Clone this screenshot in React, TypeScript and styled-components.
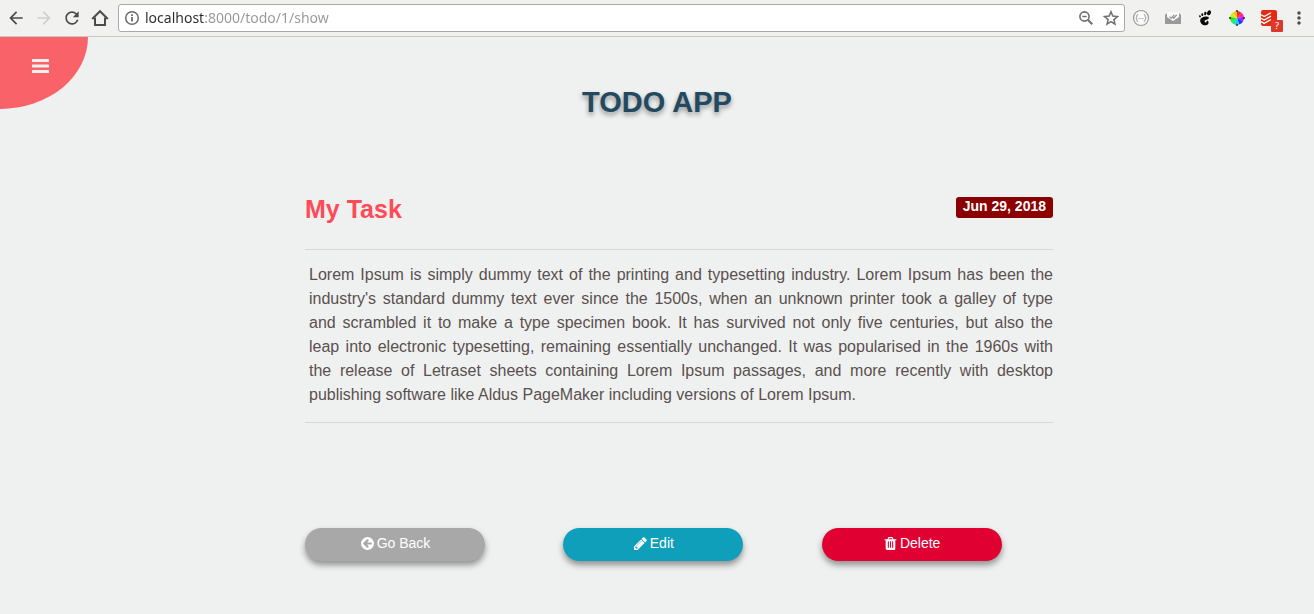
import React from "react";
import styled, { createGlobalStyle, css } from "styled-components";
import { MdArrowBack, MdArrowForward, MdRefresh, MdMoreVert } from "react-icons/md";

const GlobalStyle = createGlobalStyle`
  *, *::before, *::after { box-sizing: border-box; }
  body {
    margin: 0;
    background: #eff1f0;
    color: #555;
    font-family: "Liberation Sans", Arial, sans-serif;
    font-size: 16px;
    line-height: 24px;
  }
  button { font: inherit; border: 0; cursor: pointer; }
`;

/* ---------- Browser bar ---------- */

const Toolbar = styled.header`
  display: flex;
  align-items: center;
  height: 37px;
  padding: 0 1px 1px 2px;
  background: #f1f1ef;
  border-bottom: 1px solid #c8c8c8;
`;

const ToolButton = styled.button<{ $width?: number; $muted?: boolean }>`
  display: flex;
  flex: none;
  align-items: center;
  justify-content: center;
  width: ${(p) => p.$width ?? 28}px;
  height: 28px;
  padding: 0;
  background: none;
  color: ${(p) => (p.$muted ? "#6f6f6f" : "#4b4b4b")};
  &:disabled { color: #cfcfcf; }
`;

const OverflowButton = styled(ToolButton)`
  margin-left: 4px;
`;

const AddressBar = styled.div`
  display: flex;
  flex: 1;
  align-items: center;
  height: 28px;
  margin: 0 4px;
  padding: 0 1px 0 5px;
  background: #fff;
  border: 1px solid #a9a9a9;
  border-radius: 3px;
  color: #6b6b6b;
`;

const UrlInput = styled.input`
  flex: 1;
  min-width: 0;
  height: 24px;
  padding: 0;
  margin-left: 5px;
  border: 0;
  outline: 0;
  font: 14px/24px "Noto Sans", "Open Sans", sans-serif;
  color: transparent;
  caret-color: #222;
  background: linear-gradient(90deg, #2b2b2b 59px, #969696 59px);
  background-clip: text;
  -webkit-background-clip: text;
`;

const HomeIcon = () => (
  <svg width="18" height="18" viewBox="0 0 18 18" fill="none" stroke="currentColor" strokeWidth="2" aria-hidden>
    <path d="M1.200 10 L9 2.200 L16.800 10" />
    <path d="M4 8.500 V16 H14 V8.500" />
  </svg>
);

const InfoIcon = () => (
  <svg width="16" height="16" viewBox="0 0 16 16" fill="none" stroke="currentColor" aria-hidden>
    <circle cx="8" cy="8" r="6.300" strokeWidth="1.500" />
    <path d="M8 7 V11.500 M8 4.200 V6" strokeWidth="1.800" />
  </svg>
);

const ZoomOutIcon = () => (
  <svg width="18" height="18" viewBox="0 0 18 18" fill="none" stroke="currentColor" aria-hidden>
    <circle cx="7.500" cy="7.500" r="4.600" strokeWidth="1.600" />
    <path d="M5.300 7.500 H9.700" strokeWidth="1.400" />
    <path d="M11 11 L15.300 15.300" strokeWidth="2" />
  </svg>
);

const StarIcon = () => (
  <svg width="18" height="18" viewBox="0 0 18 18" fill="none" stroke="currentColor" strokeWidth="1.500" aria-hidden>
    <path d="M9 2.800 L10.800 7.100 L15.500 7.500 L11.900 10.600 L13 15.200 L9 12.700 L5 15.200 L6.100 10.600 L2.500 7.500 L7.200 7.100 Z" />
  </svg>
);

const BracesIcon = () => (
  <svg width="18" height="18" viewBox="0 0 18 18" fill="none" stroke="#999" aria-hidden>
    <circle cx="9" cy="9" r="7.500" fill="#fafafa" strokeWidth="1.200" />
    <path d="M6.200 5.500 q-1.400 0 -1.400 1.400 v1.100 l-1 1 1 1 v1.100 q0 1.400 1.400 1.400 M11.800 5.500 q1.400 0 1.400 1.400 v1.100 l1 1 -1 1 v1.100 q0 1.400 -1.400 1.400" />
    <path d="M6.700 9.500 h1 M8.500 9.500 h1 M10.300 9.500 h1" />
  </svg>
);

const MailIcon = () => (
  <svg width="18" height="18" viewBox="0 0 18 18" aria-hidden>
    <path d="M1 6 L4 3 H14 L17 6 V15 H1 Z" fill="#9a9a9a" />
    <path d="M3 3 H15 V9 L9 13 L3 9 Z" fill="#fbfbfb" />
    <path d="M1 7 L3 8 L9 12 L15 8 L17 7 V15 H1 Z" fill="#9a9a9a" />
    <path d="M5.500 7.500 l1.600 1.800 3.200 -3.500 M8.800 8.300 l.9 .9 3 -3.400" fill="none" stroke="#888" strokeWidth="1.100" />
  </svg>
);

const FootIcon = () => (
  <svg width="18" height="18" viewBox="0 0 18 18" aria-hidden>
    <g fill="#0a0a0a">
      <ellipse cx="13" cy="3.800" rx="1.900" ry="2.500" transform="rotate(28 13 3.800)" />
      <ellipse cx="9.300" cy="4.500" rx="1.200" ry="1.700" transform="rotate(12 9.300 4.500)" />
      <ellipse cx="6.300" cy="5.700" rx="1" ry="1.400" transform="rotate(-10 6.300 5.700)" />
      <ellipse cx="4" cy="7.300" rx=".9" ry="1.100" transform="rotate(-25 4 7.300)" />
      <path d="M12.600 8 C10.500 6.800 4.500 7.700 4.200 11.300 C4 14.700 7.300 16.700 9.800 16.300 C12.400 15.900 13.200 13.600 12.200 12.200 C11.200 11.300 10.300 12.300 10.600 13.100 C10.200 14 8.400 13.400 8.600 12 C9 10.400 13.700 11 12.600 8 Z" />
    </g>
  </svg>
);

const WHEEL = ["#ff2a1a", "#ff1fa8", "#a81cff", "#2430ff", "#12c8ff", "#12f07a", "#35e312", "#c8f01a", "#ffc21a"];

const wheelPoint = (turn: number) =>
  `${9 + 7 * Math.sin(turn * 2 * Math.PI)} ${9 - 7 * Math.cos(turn * 2 * Math.PI)}`;

const WheelIcon = () => (
  <svg width="18" height="18" viewBox="0 0 18 18" aria-hidden>
    {WHEEL.map((color, i) => (
      <path
        key={color}
        fill={color}
        d={`M9 9 L${wheelPoint(i / WHEEL.length)} A7 7 0 0 1 ${wheelPoint((i + 1) / WHEEL.length)} Z`}
      />
    ))}
    <path d="M9 1 v2 M9 15 v2 M1 9 h2 M15 9 h2" stroke="#222" strokeWidth="1.400" />
  </svg>
);

const StackIcon = () => (
  <svg width="18" height="18" viewBox="0 0 18 18" aria-hidden>
    <rect x="1" y="1" width="16" height="16" rx="2" fill="#e42a12" />
    <path
      d="M1 5.800 L4.200 7.600 L11 3.700 M1 9.200 L4.200 11 L11 7.100 M1 12.600 L4.200 14.400 L11 10.500"
      fill="none"
      stroke="#fff"
      strokeWidth="1.300"
    />
  </svg>
);

const BadgeAnchor = styled.span`
  position: relative;
  display: flex;
`;

const Badge = styled.span`
  position: absolute;
  left: 11px;
  top: 11px;
  width: 12px;
  height: 12px;
  border-radius: 1px;
  background: #db3a2b;
  color: #fff;
  font: 9px/12px "Noto Sans", sans-serif;
  text-align: center;
`;

/* ---------- Page ---------- */

const Page = styled.div`
  position: relative;
  padding-bottom: 48px;
`;

const MenuButton = styled.button`
  position: absolute;
  left: 0;
  top: 0;
  display: flex;
  justify-content: center;
  width: 88px;
  height: 72px;
  padding: 22px 8px 0 0;
  background: #f96268;
  border-bottom-right-radius: 100%;
  color: #eff1f0;
`;

const AppTitle = styled.h1`
  margin: 0;
  padding-top: 48px;
  text-align: center;
  color: #22495f;
  font-size: 29px;
  line-height: 34px;
  text-shadow: 0 3px 5px rgba(0, 0, 0, 0.4);
`;

const Main = styled.main`
  max-width: 792px;
  margin: 0 auto;
  padding-left: 44px;
`;

const TaskHeader = styled.div`
  display: flex;
  align-items: flex-start;
  justify-content: space-between;
  padding: 74px 0 24px;
  border-bottom: 1px solid #d5d8d8;
`;

const TaskTitle = styled.h2`
  margin: 0;
  color: #ff4b57;
  font-size: 25px;
  line-height: 32px;
`;

const DateLabel = styled.time`
  height: 21px;
  margin-top: 4px;
  padding: 0 7px;
  border-radius: 3px;
  background: #8b0000;
  color: #fff;
  font-size: 14px;
  font-weight: bold;
  line-height: 19px;
`;

const TaskText = styled.p`
  margin: 0;
  padding: 13px 0 15px 4px;
  border-bottom: 1px solid #d5d8d8;
  color: #5a504f;
  text-align: justify;
`;

const Actions = styled.div`
  display: grid;
  grid-template-columns: repeat(3, 1fr);
  gap: 27px;
  margin-top: 105px;
`;

const pill = css<{ $color: string }>`
  display: flex;
  justify-content: center;
  gap: 2px;
  width: 180px;
  height: 33px;
  padding: 5px 0 0;
  border-radius: 17px;
  background: ${(p) => p.$color};
  box-shadow: 0 4px 6px rgba(0, 0, 0, 0.4);
  color: #fff;
  font-size: 14px;
  line-height: 20px;
  text-decoration: none;
`;

const PillLink = styled.a`
  ${pill}
`;

const PillButton = styled.button`
  ${pill}
`;

const ActionIcon = styled.svg`
  width: 15px;
  height: 15px;
  margin-top: 3px;
  fill: currentColor;
`;

const BACK =
  "M1408 960v-128q0-26-19-45t-45-19h-502l189-189q19-19 19-45t-19-45l-91-91q-18-18-45-18t-45 18l-362 362-91 91q-18 18-18 45t18 45l91 91 362 362q18 18 45 18t45-18l91-91q18-18 18-45t-18-45l-189-189h502q26 0 45-19t19-45zm256-64q0 209-103 385.500t-279.500 279.500-385.500 103-385.500-103-279.500-279.500-103-385.500 103-385.500 279.500-279.500 385.500-103 385.500 103 279.500 279.500 103 385.500z";
const PENCIL =
  "M491 1536l91-91-235-235-91 91v107h128v128h107zm523-928q0-22-22-22-10 0-17 7l-542 542q-7 7-7 17 0 22 22 22 10 0 17-7l542-542q7-7 7-17zm-54-192l416 416-832 832h-416v-416zm683 96q0 53-37 90l-166 166-416-416 166-165q36-38 90-38 53 0 91 38l235 234q37 39 37 91z";
const TRASH =
  "M704 1376v-704q0-14-9-23t-23-9h-64q-14 0-23 9t-9 23v704q0 14 9 23t23 9h64q14 0 23-9t9-23zm256 0v-704q0-14-9-23t-23-9h-64q-14 0-23 9t-9 23v704q0 14 9 23t23 9h64q14 0 23-9t9-23zm256 0v-704q0-14-9-23t-23-9h-64q-14 0-23 9t-9 23v704q0 14 9 23t23 9h64q14 0 23-9t9-23zm-544-992h448l-48-117q-7-9-17-11h-317q-10 2-17 11zm928 32v64q0 14-9 23t-23 9h-96v948q0 83-47 143.500t-113 60.500h-832q-66 0-113-58.500t-47-141.500v-952h-96q-14 0-23-9t-9-23v-64q0-14 9-23t23-9h309l70-167q15-37 54-63t79-26h320q40 0 79 26t54 63l70 167h309q14 0 23 9t9 23z";

export default function App() {
  return (
    <>
      <GlobalStyle />
      <Toolbar>
        <ToolButton aria-label="Back"><MdArrowBack size={20} /></ToolButton>
        <ToolButton aria-label="Forward" disabled><MdArrowForward size={20} /></ToolButton>
        <ToolButton aria-label="Reload"><MdRefresh size={20} /></ToolButton>
        <ToolButton aria-label="Home"><HomeIcon /></ToolButton>
        <AddressBar>
          <InfoIcon />
          <UrlInput aria-label="Address" defaultValue="localhost:8000/todo/1/show" spellCheck={false} />
          <ToolButton aria-label="Zoom" $width={25} $muted><ZoomOutIcon /></ToolButton>
          <ToolButton aria-label="Bookmark this page" $width={25} $muted><StarIcon /></ToolButton>
        </AddressBar>
        <ToolButton aria-label="JSON viewer" $width={24}><BracesIcon /></ToolButton>
        <ToolButton aria-label="Mail tracker" $width={40}><MailIcon /></ToolButton>
        <ToolButton aria-label="GNOME Shell" $width={24}><FootIcon /></ToolButton>
        <ToolButton aria-label="Color picker" $width={40}><WheelIcon /></ToolButton>
        <ToolButton aria-label="Todoist" $width={24}>
          <BadgeAnchor>
            <StackIcon />
            <Badge>?</Badge>
          </BadgeAnchor>
        </ToolButton>
        <OverflowButton aria-label="Browser menu"><MdMoreVert size={20} /></OverflowButton>
      </Toolbar>

      <Page>
        <MenuButton aria-label="Menu">
          <svg width="17" height="14" viewBox="0 0 17 14" fill="currentColor" aria-hidden>
            <rect y="0" width="17" height="3" rx=".5" />
            <rect y="5.500" width="17" height="3" rx=".5" />
            <rect y="11" width="17" height="3" rx=".5" />
          </svg>
        </MenuButton>
        <AppTitle>TODO APP</AppTitle>
        <Main>
          <TaskHeader>
            <TaskTitle>My Task</TaskTitle>
            <DateLabel dateTime="2018-06-29">Jun 29, 2018</DateLabel>
          </TaskHeader>
          <TaskText>
            Lorem Ipsum is simply dummy text of the printing and typesetting industry. Lorem Ipsum has been the
            industry's standard dummy text ever since the 1500s, when an unknown printer took a galley of type
            and&nbsp;scrambled it to make a type specimen book. It has survived not only five centuries, but also the
            leap&nbsp;into electronic typesetting, remaining essentially unchanged. It was popularised in the 1960s
            with the&nbsp;release of Letraset sheets containing Lorem Ipsum passages, and more recently with desktop
            publishing&nbsp;software like Aldus PageMaker including versions of Lorem Ipsum.
          </TaskText>
          <Actions>
            <PillLink href="#back" $color="#a8a8a8">
              <ActionIcon viewBox="0 0 1792 1792" aria-hidden><path d={BACK} /></ActionIcon>
              Go Back
            </PillLink>
            <PillLink href="#edit" $color="#109fbb">
              <ActionIcon viewBox="0 0 1792 1792" aria-hidden><path d={PENCIL} /></ActionIcon>
              Edit
            </PillLink>
            <PillButton type="button" $color="#e00031">
              <ActionIcon viewBox="0 0 1792 1792" aria-hidden><path d={TRASH} /></ActionIcon>
              Delete
            </PillButton>
          </Actions>
        </Main>
      </Page>
    </>
  );
}
